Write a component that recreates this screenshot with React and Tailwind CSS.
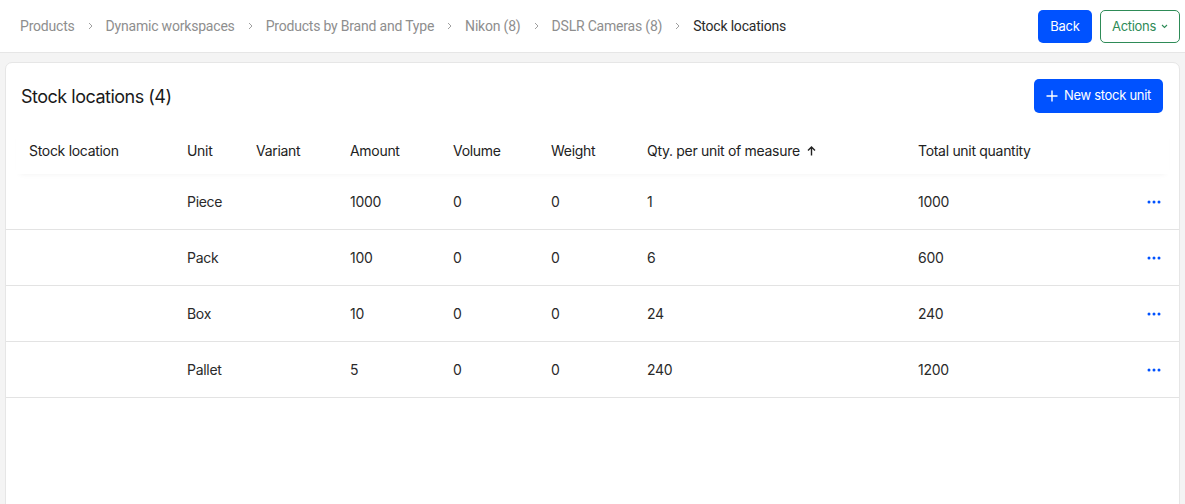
import React from "react";

const rows = [
  { unit: "Piece", amount: "1000", qty: "1", total: "1000" },
  { unit: "Pack", amount: "100", qty: "6", total: "600" },
  { unit: "Box", amount: "10", qty: "24", total: "240" },
  { unit: "Pallet", amount: "5", qty: "240", total: "1200" },
];

const crumbs = [
  "Products",
  "Dynamic workspaces",
  "Products by Brand and Type",
  "Nikon (8)",
  "DSLR Cameras (8)",
];

function Chevron() {
  return (
    <svg width="5" height="8" viewBox="0 0 5 8" fill="none" className="shrink-0 mx-[13px]">
      <path d="M1 1l3 3-3 3" stroke="#a0a0a0" strokeWidth="1" />
    </svg>
  );
}

function Cols({ children, className = "" }) {
  return (
    <div className={"grid grid-cols-[158px_69px_94px_103px_98px_96px_271px_1fr_32px] items-center " + className}>
      {children}
    </div>
  );
}

export default function App() {
  return (
    <div
      className="w-[1185px] h-[504px] overflow-hidden bg-[#f4f4f4] text-[#1f1f1f]"
      style={{ fontFamily: "Inter, 'Liberation Sans', sans-serif" }}
    >
      <header className="h-[53px] bg-white border-b border-[#e6e6e6] flex items-center justify-between pl-5 pr-[5px]">
        <nav
          className="flex items-center text-[14px] text-[#8e8e8e] tracking-[-0.2px]"
          style={{ fontFamily: "Roboto, 'Liberation Sans', sans-serif" }}
        >
          {crumbs.map((c) => (
            <React.Fragment key={c}>
              <span>{c}</span>
              <Chevron />
            </React.Fragment>
          ))}
          <span className="text-[#2a2a2a]">Stock locations</span>
        </nav>
        <div className="flex items-center gap-2 pt-[1px]">
          <button className="h-[33px] w-[54px] rounded-[5px] bg-[#0052ff] text-white text-[13px] tracking-[-0.2px]">Back</button>
          <button className="h-[33px] w-[80px] rounded-[5px] border border-[#2e8b57] text-[#2e8b57] text-[13px] tracking-[-0.3px] flex items-center justify-center gap-[5px]">
            Actions
            <svg width="7" height="5" viewBox="0 0 7 5" fill="none">
              <path d="M1 1l2.5 2.5L6 1" stroke="#2e8b57" strokeWidth="1.1" />
            </svg>
          </button>
        </div>
      </header>

      <main className="pt-[9px] px-[5px]">
        <section className="bg-white border border-[#e6e6e6] rounded-[7px] h-[460px]">
          <div className="flex items-center justify-between pl-[15px] pr-4 pt-4 pb-[14px]">
            <h2 className="text-[18px] text-[#1a1a1a] tracking-[-0.5px] pt-[1px]">Stock locations (4)</h2>
            <button className="h-[34px] w-[129px] rounded-[5px] bg-[#0052ff] text-white text-[13px] tracking-[-0.3px] flex items-center justify-center gap-[6px]">
              <svg width="12" height="12" viewBox="0 0 12 12" fill="none">
                <path d="M6 0.5v11M0.5 6h11" stroke="white" strokeWidth="1.4" />
              </svg>
              New stock unit
            </button>
          </div>

          <div>
            <div className="mx-[10px] shadow-[0_4px_6px_-4px_rgba(0,0,0,0.06)]">
              <Cols className="h-[47px] text-[14px] text-[#222] tracking-[-0.3px] pl-[13px]">
                <span>Stock location</span>
                <span>Unit</span>
                <span>Variant</span>
                <span>Amount</span>
                <span>Volume</span>
                <span>Weight</span>
                <span className="flex items-center gap-[7px]">
                  Qty. per unit of measure
                  <svg width="9" height="10" viewBox="0 0 9 10" fill="none">
                    <path d="M4.5 9.5V1M1 4.5l3.5-3.5 3.5 3.5" stroke="#222" strokeWidth="1.4" />
                  </svg>
                </span>
                <span>Total unit quantity</span>
                <span />
              </Cols>
            </div>
            {rows.map((r) => (
              <div key={r.unit} className="border-b border-[#e3e3e3]">
                <Cols className="h-[55px] text-[14px] text-[#2a2a2a] tracking-[-0.3px] pl-[23px]">
                  <span />
                  <span>{r.unit}</span>
                  <span />
                  <span>{r.amount}</span>
                  <span>0</span>
                  <span>0</span>
                  <span>{r.qty}</span>
                  <span>{r.total}</span>
                  <span className="flex items-center">
                    <svg width="14" height="4" viewBox="0 0 14 4">
                      <circle cx="2" cy="2" r="1.5" fill="#0052ff" />
                      <circle cx="7" cy="2" r="1.5" fill="#0052ff" />
                      <circle cx="12" cy="2" r="1.5" fill="#0052ff" />
                    </svg>
                  </span>
                </Cols>
              </div>
            ))}
          </div>
        </section>
      </main>
    </div>
  );
}
